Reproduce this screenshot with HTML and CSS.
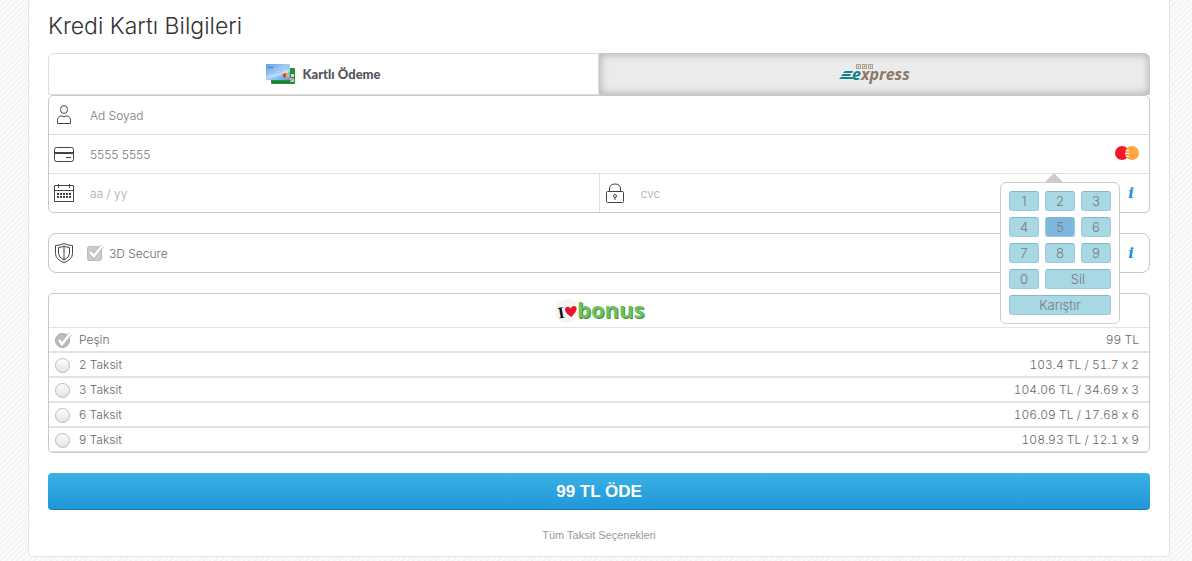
FILE: index.html
```html
<!DOCTYPE html>
<html lang="tr">
<head>
    <meta charset="UTF-8">
    <meta name="viewport" content="width=device-width, initial-scale=1.0">
    <title>Kredi Kartı Bilgileri</title>
    <link rel="stylesheet" href="styles.css">
</head>
<body>

    <form class="panel">
        <h1>Kredi Kartı Bilgileri</h1>

        <div class="tabs">
            <button type="button" class="tab active">
                <svg width="30" height="20" viewBox="0 0 30 20" aria-hidden="true">
                    <defs>
                        <linearGradient id="blue" x1="0" y1="0" x2="1" y2="1">
                            <stop offset="0" stop-color="#5d9fe2"/>
                            <stop offset=".5" stop-color="#a5cdf5"/>
                            <stop offset="1" stop-color="#5e9ee0"/>
                        </linearGradient>
                    </defs>
                    <rect x="5" y="4" width="24" height="16" rx="1" fill="#23913c"/>
                    <path d="M6 18h22" stroke="#126d2b"/>
                    <rect x="25" y="10" width="3" height="3" fill="#d3dfc8"/>
                    <rect x="24" y="14" width="4" height="4" fill="#c8ccd8"/>
                    <path d="M24 17l4-3" stroke="#cf5548"/>
                    <rect width="24" height="16" rx="1" fill="url(#blue)"/>
                    <path d="M0 12C8 13 16 6 24 4v4C17 9 9 15 0 14z" fill="#cbe3fa" opacity=".5"/>
                    <path d="M2 3.500h2m1 0h2" stroke="#3e719f"/>
                    <path d="M2 11h13" stroke="#d7eafc" stroke-dasharray="2 1" opacity=".6"/>
                    <rect x="18" y="6" width="4" height="3" fill="#d5d8d5"/>
                    <circle cx="19" cy="11.500" r="2" fill="#e1262b"/>
                    <circle cx="21.500" cy="11.500" r="2" fill="#f4b348"/>
                </svg>
                <span>Kartlı Ödeme</span>
            </button>
            <button type="button" class="tab" aria-label="BKM Express">
                <svg width="76" height="28" viewBox="-3 0 76 28" aria-hidden="true">
                    <g stroke="#aaa39c" fill="#e2ddd8">
                        <rect x="16.500" y="4.500" width="4" height="4"/>
                        <rect x="22.500" y="4.500" width="4" height="4" fill="#ead89d"/>
                        <rect x="28.500" y="4.500" width="4" height="4"/>
                    </g>
                    <path d="M18 6.500h1M24 6.500h1M30 6.500h1" stroke="#766b62"/>
                    <path d="M5 11h8l-1 2H3zM3 14h8l-1 2H1zM1 17h11l2 2H-1z" fill="#12818c"/>
                    <text x="12" y="20" class="express"><tspan fill="#12818c">e</tspan><tspan fill="#8c7868">xpress</tspan></text>
                </svg>
            </button>
        </div>

        <div class="box card-box">
            <div class="row">
                <label class="icon" for="name" aria-label="Ad Soyad">
                    <svg width="22" height="22" viewBox="0 0 22 22">
                        <ellipse cx="11" cy="5.500" rx="3.500" ry="4"/>
                        <path d="M4.500 19.500v-3q0-4.500 4-4.500 2.500 1 5 0 4 0 4 4.500v3z"/>
                    </svg>
                </label>
                <input type="text" id="name" value="Ad Soyad">
            </div>
            <div class="row number-row">
                <label class="icon" for="number" aria-label="Kart numarası">
                    <svg width="22" height="22" viewBox="0 0 22 22">
                        <rect x="1.500" y="4.500" width="19" height="14" rx="2"/>
                        <path d="M1 10h20" stroke-width="2"/>
                        <path d="M13 14.500h5"/>
                    </svg>
                </label>
                <input type="text" id="number" value="5555 5555">
                <svg class="brand" width="24" height="14" viewBox="0 0 24 14" aria-hidden="true">
                    <circle cx="7" cy="7" r="7" fill="#f5182b"/>
                    <circle cx="17" cy="7" r="7" fill="#ffa740"/>
                    <path d="M11 4.500h3M10 7.500h4M11 10.500h3" stroke="#fff"/>
                </svg>
                <div class="keypad">
                    <button type="button">1</button>
                    <button type="button">2</button>
                    <button type="button">3</button>
                    <button type="button">4</button>
                    <button type="button" class="pressed">5</button>
                    <button type="button">6</button>
                    <button type="button">7</button>
                    <button type="button">8</button>
                    <button type="button">9</button>
                    <button type="button">0</button>
                    <button type="button" class="wide">Sil</button>
                    <button type="button" class="full">Karıştır</button>
                </div>
            </div>
            <div class="row split">
                <div class="cell">
                    <label class="icon" for="expiry" aria-label="Son kullanma tarihi">
                        <svg width="22" height="22" viewBox="0 0 22 22">
                            <path d="M1.500 3.500h19v16h-19zM1 8.500h20M5.500 2v4M16.500 2v4"/>
                            <path d="M4 12h14M4 15h14" stroke-width="2" stroke-dasharray="2 1"/>
                        </svg>
                    </label>
                    <input type="text" id="expiry" placeholder="aa / yy">
                </div>
                <div class="cell">
                    <label class="icon" for="cvc" aria-label="CVC">
                        <svg width="22" height="22" viewBox="0 0 22 22">
                            <rect x="2.500" y="9.500" width="17" height="11" rx="1"/>
                            <path d="M5.500 9V7q0-5 5.500-5t5.500 5v2"/>
                            <circle cx="11" cy="14" r="1.500"/>
                            <path d="M11 15.500v2.500"/>
                        </svg>
                    </label>
                    <input type="text" id="cvc" placeholder="cvc">
                    <button type="button" class="info">i</button>
                </div>
            </div>
        </div>

        <div class="box secure-box">
            <span class="icon">
                <svg width="22" height="22" viewBox="0 0 22 22">
                    <path d="M2.500 3.500Q7 3.500 11 1.500q4 2 8.500 2v8q0 6-8.500 9-8.500-3-8.500-9z"/>
                    <path d="M5.500 5.500q3 0 5.500-1.500 2.500 1.500 5.500 1.500v6q0 4-5.500 6.500-5.500-2.500-5.500-6.500zM11 4v14"/>
                </svg>
            </span>
            <input type="checkbox" id="secure" checked>
            <label for="secure">3D Secure</label>
            <button type="button" class="info">i</button>
        </div>

        <table class="box plans">
            <thead>
                <tr>
                    <th colspan="2">
                        <svg width="100" height="32" viewBox="-5 -4 100 32" role="img" aria-label="I love bonus">
                            <circle cx="13" cy="12" r="12" fill="#f5f5f5"/>
                            <path d="M17.500 18c-3-2-6-4-6.500-7-.5-3.500 4-4.500 5.500-1.500C18 6 23 6 22.500 10c0 3-3 5-5 8z" fill="#e8142d"/>
                            <text x="4" y="19" class="love" transform="rotate(-10 7 14)">I</text>
                            <text x="24" y="20" class="bonus shade">bonus</text>
                            <text x="23" y="19" class="bonus">bonus</text>
                        </svg>
                    </th>
                </tr>
            </thead>
            <tbody>
                <tr>
                    <td><label><input type="radio" name="plan" checked>Peşin</label></td>
                    <td>99 TL</td>
                </tr>
                <tr>
                    <td><label><input type="radio" name="plan">2 Taksit</label></td>
                    <td>103.4 TL / 51.7 x 2</td>
                </tr>
                <tr>
                    <td><label><input type="radio" name="plan">3 Taksit</label></td>
                    <td>104.06 TL / 34.69 x 3</td>
                </tr>
                <tr>
                    <td><label><input type="radio" name="plan">6 Taksit</label></td>
                    <td>106.09 TL / 17.68 x 6</td>
                </tr>
                <tr>
                    <td><label><input type="radio" name="plan">9 Taksit</label></td>
                    <td>108.93 TL / 12.1 x 9</td>
                </tr>
            </tbody>
        </table>

        <button type="submit" class="pay">99 TL ÖDE</button>
        <a href="#" class="all-plans">Tüm Taksit Seçenekleri</a>
    </form>

</body>
</html>
```
FILE: styles.css
```css
* {
    box-sizing: border-box;
}

body {
    margin: 0;
    padding: 0 22px 4px 28px;
    background: #f8f8f8 repeating-linear-gradient(135deg, #f3f3f3 0, #f3f3f3 1px, #fbfbfb 2px, #fbfbfb 4px);
    font-family: "Inter", "Helvetica Neue", "Liberation Sans", sans-serif;
    font-size: 12px;
    font-weight: 300;
    font-variant-ligatures: no-contextual;
    color: #66676e;
}

button,
input {
    font: inherit;
    color: inherit;
    margin: 0;
}

button {
    cursor: pointer;
}

.panel {
    display: flex;
    flex-direction: column;
    padding: 10px 19px 13px;
    background: #fff;
    border: 1px solid #e5e5e5;
    border-top: 0;
    border-radius: 0 0 5px 5px;
}

h1 {
    margin: 0 0 11px;
    font-size: 23px;
    line-height: 32px;
    font-weight: 300;
    color: #333;
}

/* tabs */
.tabs {
    display: flex;
}

.tab {
    flex: 1;
    display: flex;
    align-items: center;
    justify-content: center;
    gap: 6px;
    height: 42px;
    padding: 0;
    border: 1px solid #c8c8c8;
    border-radius: 0 6px 0 0;
    background: #ebebeb;
    box-shadow: inset 0 0 8px #aaa;
}

.tab.active {
    background: #fff;
    border-color: #ddd;
    border-radius: 6px 0 0 0;
    box-shadow: none;
    font-family: "Lato", sans-serif;
    font-size: 13px;
    font-weight: 900;
    color: #53545c;
}

.express {
    font: italic 700 16px "Open Sans", sans-serif;
}

/* boxes */
.box {
    border: 1px solid #c8c8c8;
    border-radius: 5px;
    background: #fff;
}

.row {
    display: flex;
    align-items: center;
    height: 39px;
    border-bottom: 1px solid #e0e0e0;
}

.row:last-child {
    height: 38px;
    border-bottom: 0;
}

.cell {
    flex: 1;
    display: flex;
    align-items: center;
    height: 100%;
}

.cell + .cell {
    border-left: 1px solid #e0e0e0;
}

.icon {
    display: flex;
    margin: 0 15px 0 4px;
}

.icon svg {
    fill: none;
    stroke: #444;
}

.row input {
    flex: 1;
    min-width: 0;
    padding: 0;
    border: 0;
    outline: 0;
    background: none;
    color: #777;
}

.row input::placeholder {
    color: #aaa;
    opacity: 1;
}

.brand {
    margin: 0 10px 2px 0;
}

.info {
    width: 16px;
    margin: 0 10px 0 auto;
    padding: 0;
    border: 0;
    background: none;
    font: italic 700 15px "DejaVu Serif", serif;
    color: #1f8fe0;
}

/* number pad */
.number-row {
    position: relative;
}

.keypad {
    position: absolute;
    top: 47px;
    right: 29px;
    display: grid;
    grid-template-columns: repeat(3, 30px);
    gap: 6px;
    padding: 8px;
    border: 1px solid #ccc;
    border-radius: 6px;
    background: #fff;
}

.keypad::before {
    content: "";
    position: absolute;
    top: -10px;
    left: 44px;
    border: 9px solid transparent;
    border-top: 0;
    border-bottom-color: #ccc;
}

.keypad button {
    height: 20px;
    padding: 0;
    border: 1px solid #9ecae1;
    border-top-color: #86b6cc;
    border-radius: 3px;
    background: #a9d8e5;
    font-size: 13px;
    line-height: 18px;
    color: #777;
}

.keypad .pressed {
    background: #7db8dc;
}

.keypad .wide {
    grid-column: span 2;
}

.keypad .full {
    grid-column: span 3;
}

/* 3d secure */
.secure-box {
    display: flex;
    align-items: center;
    height: 40px;
    margin: 20px 0;
    border-radius: 8px;
}

.secure-box .icon {
    margin-right: 11px;
}

input[type="checkbox"] {
    appearance: none;
    width: 18px;
    height: 18px;
    margin-right: 5px;
    background: url("data:image/svg+xml,%3Csvg xmlns='http://www.w3.org/2000/svg' viewBox='0 0 18 18'%3E%3Crect x='1.500' y='2.500' width='14' height='14' rx='2' fill='%23ccc' stroke='%23bbb'/%3E%3Cpath d='M4 8l4 4 8-10' fill='none' stroke='%23999' stroke-width='4'/%3E%3Cpath d='M4 8l4 4 8-10' fill='none' stroke='%23fff' stroke-width='3'/%3E%3C/svg%3E");
}

/* instalments */
.plans {
    width: 100%;
    border-spacing: 0;
    margin-bottom: 20px;
}

.plans th,
.plans td {
    padding: 0;
    border-bottom: 2px solid #e2e2e2;
}

.plans th {
    height: 34px;
    border-bottom-width: 1px;
}

.plans th svg {
    display: block;
    margin: 0 auto;
}

.plans td {
    height: 25px;
    line-height: 23px;
}

.plans tr:last-child td {
    height: 24px;
    border-bottom-width: 1px;
}

.plans td:last-child {
    padding-right: 10px;
    text-align: right;
    font-variant-numeric: tabular-nums;
}

.plans label {
    display: flex;
    align-items: center;
    gap: 7px;
    padding-left: 5px;
}

input[type="radio"] {
    appearance: none;
    width: 18px;
    height: 16px;
    background: url("data:image/svg+xml,%3Csvg xmlns='http://www.w3.org/2000/svg' viewBox='0 0 18 16'%3E%3Cdefs%3E%3ClinearGradient id='g' x2='0' y2='1'%3E%3Cstop stop-color='%23fff'/%3E%3Cstop offset='1' stop-color='%23e2e2e2'/%3E%3C/linearGradient%3E%3C/defs%3E%3Ccircle cx='8.500' cy='8.500' r='7' fill='url(%23g)' stroke='%23bbb'/%3E%3C/svg%3E");
}

input[type="radio"]:checked {
    background: url("data:image/svg+xml,%3Csvg xmlns='http://www.w3.org/2000/svg' viewBox='0 0 18 16'%3E%3Ccircle cx='8.500' cy='8.500' r='7' fill='%23bbb' stroke='%23aaa'/%3E%3Cpath d='M5 8l3 4 8-10' fill='none' stroke='%23999' stroke-width='4'/%3E%3Cpath d='M5 8l3 4 8-10' fill='none' stroke='%23fff' stroke-width='3'/%3E%3C/svg%3E");
}

.love {
    font: 700 16px "Liberation Serif", serif;
    fill: #111;
}

.bonus {
    font: 700 22px "Open Sans", sans-serif;
    fill: #6cc35b;
}

.bonus.shade {
    fill: #3f8b3d;
}

/* payment */
.pay {
    height: 37px;
    padding: 2px 0 0;
    border: 0;
    border-bottom: 1px solid #1a7dbb;
    border-radius: 4px;
    background: linear-gradient(#3ab2e4, #2196d9);
    font: 700 17px "Liberation Sans", Arial, sans-serif;
    color: #fff;
}

.all-plans {
    align-self: center;
    margin-top: 17px;
    font: 11px/16px "Liberation Sans", Arial, sans-serif;
    color: #999;
    text-decoration: none;
}
```
